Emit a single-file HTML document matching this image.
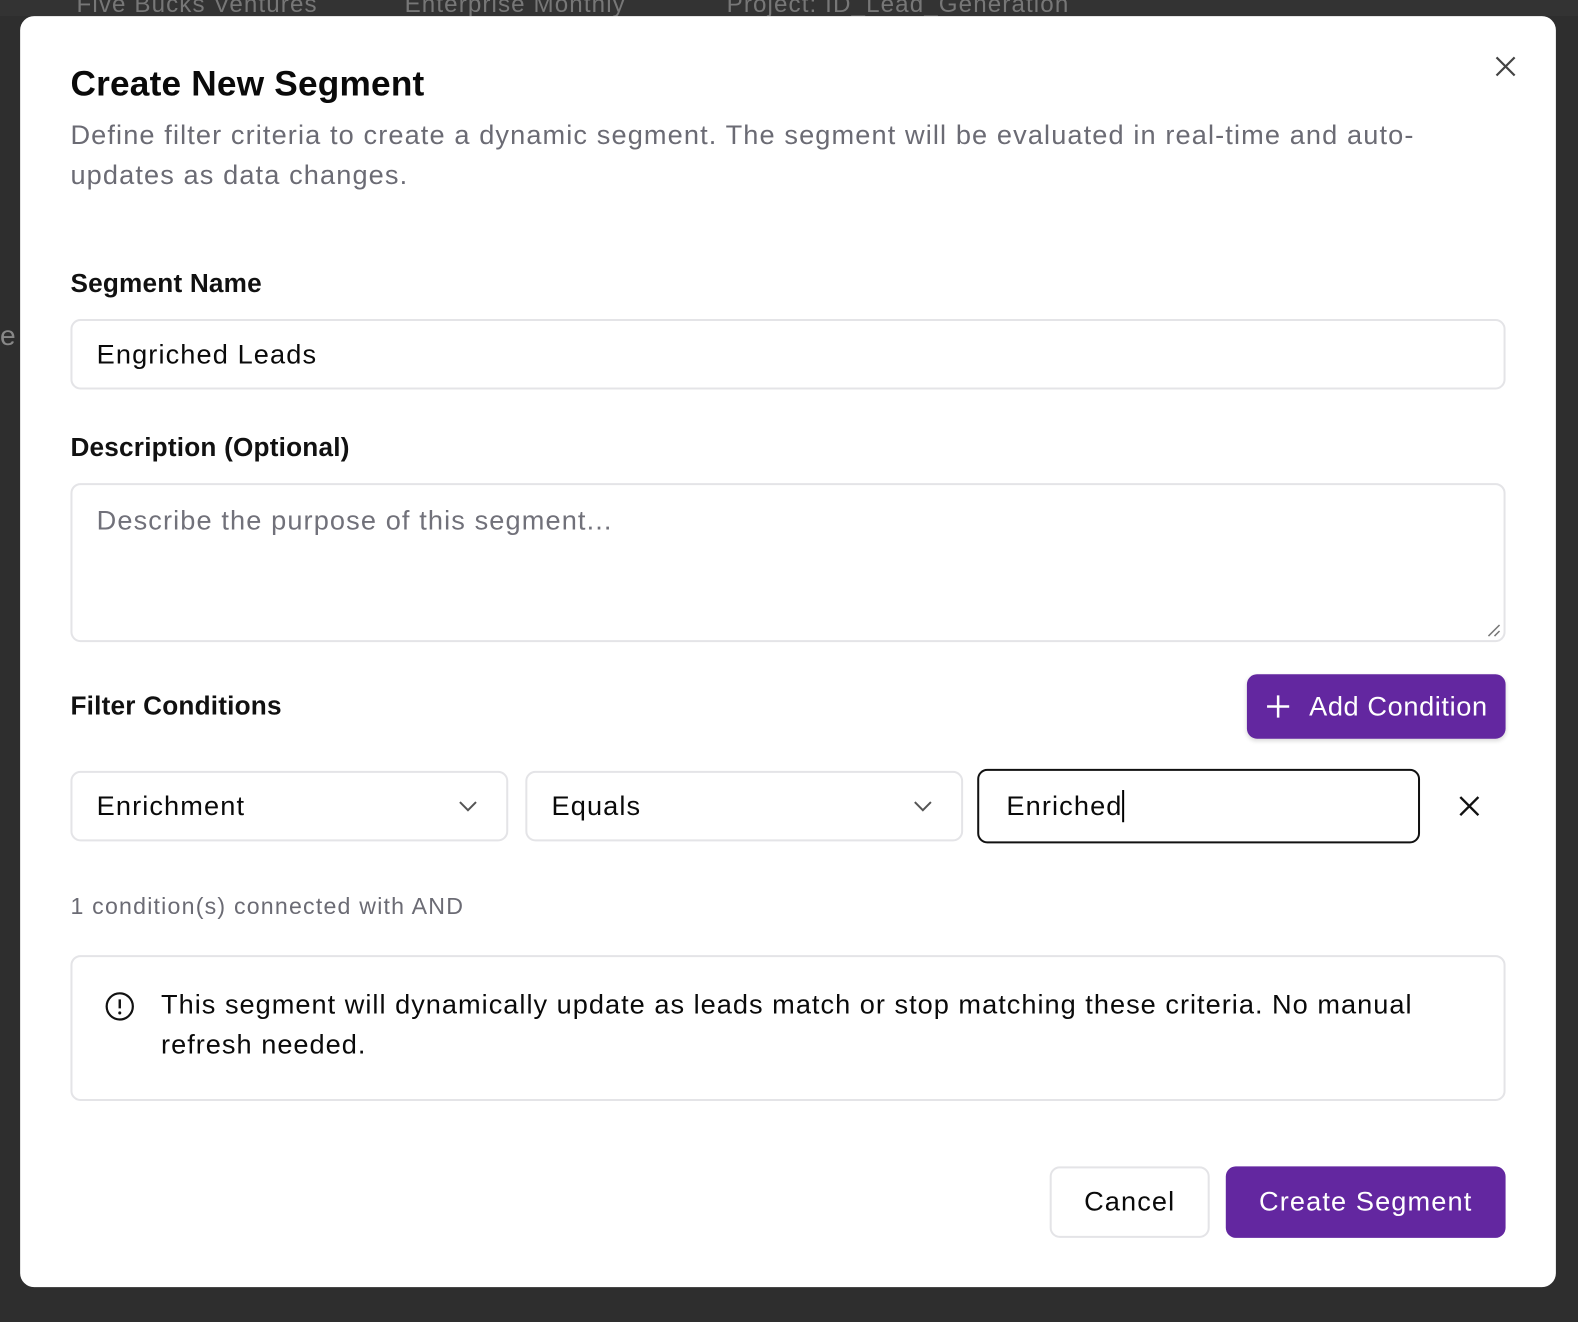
<!DOCTYPE html>
<html><head><style>
*{box-sizing:border-box;margin:0;padding:0}
body{width:1578px;height:1314px;background:#2e2e2e;font-family:"Liberation Sans",sans-serif;position:relative;overflow:hidden;color:#0a0a0a;letter-spacing:1.1px}
#w{position:absolute;left:0;top:0;width:1578px;height:1314px;transform:scale(1.0064);transform-origin:0 0}
.top{position:absolute;left:0;top:0;width:1578px;height:16px;background:#333;color:#777;font-size:24px;line-height:10px;overflow:hidden}
.a{position:absolute}
.modal{position:absolute;left:20px;top:16px;width:1526px;height:1263px;background:#fff;border-radius:14px}
.lbl{position:absolute;left:50px;font-size:26px;font-weight:bold;letter-spacing:0.2px;color:#111}
.box{position:absolute;border:2px solid #e4e4e7;border-radius:10px;background:#fff;font-size:27px;padding-left:24px;display:flex;align-items:center}
.btn{position:absolute;border-radius:10px;display:flex;align-items:center;justify-content:center;font-size:27px}
</style></head><body><div id="w">
<div class="top"><span class="a" style="left:76px;top:0">Five Bucks Ventures</span><span class="a" style="left:402px;top:0">Enterprise Monthly</span><span class="a" style="left:722px;top:0">Project: ID_Lead_Generation</span></div>
<div class="a" style="left:0;top:318px;color:#888;font-size:28px">e</div>
<div class="modal">
<div class="a" style="left:50px;top:48px;font-size:35px;font-weight:bold;letter-spacing:0.2px">Create New Segment</div>
<svg class="a" style="left:1464px;top:38px" width="24" height="24" viewBox="0 0 24 24"><path d="M3 3L21 21M21 3L3 21" stroke="#444" stroke-width="2.2"/></svg>
<div class="a" style="left:50px;top:98px;width:1400px;font-size:27px;line-height:40px;color:#6b6b74">Define filter criteria to create a dynamic segment. The segment will be evaluated in real-time and auto-updates as data changes.</div>
<div class="lbl" style="top:250px">Segment Name</div>
<div class="box" style="left:50px;top:301px;width:1426px;height:70px">Engriched Leads</div>
<div class="lbl" style="top:413px">Description (Optional)</div>
<div class="box" style="left:50px;top:464px;width:1426px;height:158px;align-items:flex-start;padding-top:20px;color:#71717a">Describe the purpose of this segment...
<svg class="a" style="right:2px;bottom:2px" width="16" height="16"><path d="M14 3L3 14M14 9L9 14" stroke="#777" stroke-width="1.5"/></svg></div>
<div class="lbl" style="top:670px">Filter Conditions</div>
<div class="btn" style="left:1219px;top:654px;width:257px;height:64px;background:#6327a0;color:#fff;box-shadow:0 2px 4px rgba(0,0,0,.15);letter-spacing:0.6px"><svg width="26" height="26" style="margin-right:18px"><path d="M13 2V24M2 13H24" stroke="#fff" stroke-width="2.5"/></svg>Add Condition</div>
<div class="box" style="left:50px;top:750px;width:435px;height:70px">Enrichment<svg class="a" style="left:382px;top:25px" width="22" height="16"><path d="M3 4L11 12L19 4" fill="none" stroke="#555" stroke-width="2"/></svg></div>
<div class="box" style="left:502px;top:750px;width:435px;height:70px">Equals<svg class="a" style="left:382px;top:25px" width="22" height="16"><path d="M3 4L11 12L19 4" fill="none" stroke="#555" stroke-width="2"/></svg></div>
<div class="box" style="left:951px;top:748px;width:440px;height:74px;border-color:#111;padding-left:27px">Enriched<span style="display:inline-block;width:2px;height:32px;background:#000"></span></div>
<svg class="a" style="left:1429px;top:774px" width="22" height="22"><path d="M2 2L20 20M20 2L2 20" stroke="#111" stroke-width="2.4"/></svg>
<div class="a" style="left:50px;top:871px;font-size:23px;color:#6b6b74;letter-spacing:1.2px">1 condition(s) connected with AND</div>
<div class="box" style="left:50px;top:933px;width:1426px;height:145px;align-items:flex-start;padding:27px 40px 0 88px;font-size:27px;line-height:40px;letter-spacing:1px">This segment will dynamically update as leads match or stop matching these criteria. No manual refresh needed.
<svg class="a" style="left:32px;top:34px" width="30" height="30"><circle cx="15" cy="15" r="13" fill="none" stroke="#111" stroke-width="2.2"/><path d="M15 8V17" stroke="#111" stroke-width="2.4"/><circle cx="15" cy="21.5" r="1.5" fill="#111"/></svg></div>
<div class="btn" style="left:1023px;top:1143px;width:159px;height:71px;border:2px solid #e4e4e7">Cancel</div>
<div class="btn" style="left:1198px;top:1143px;width:278px;height:71px;background:#6327a0;color:#fff">Create Segment</div>
</div>
</div></body></html>
